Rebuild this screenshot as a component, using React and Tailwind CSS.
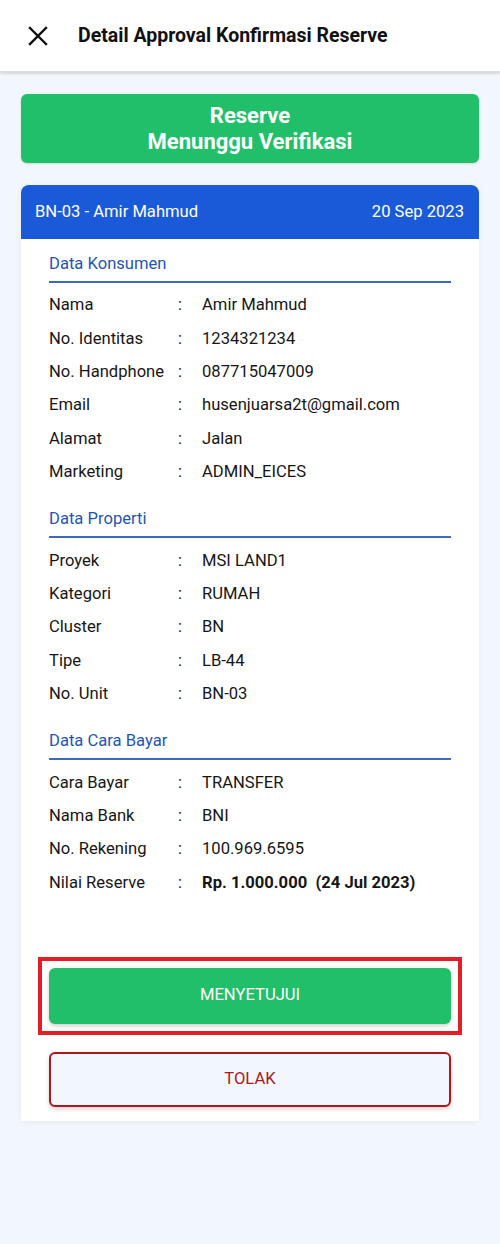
import React from "react";

const konsumen = [
  ["Nama", "Amir Mahmud"],
  ["No. Identitas", "1234321234"],
  ["No. Handphone", "087715047009"],
  ["Email", "husenjuarsa2t@gmail.com"],
  ["Alamat", "Jalan"],
  ["Marketing", "ADMIN_EICES"],
];

const properti = [
  ["Proyek", "MSI LAND1"],
  ["Kategori", "RUMAH"],
  ["Cluster", "BN"],
  ["Tipe", "LB-44"],
  ["No. Unit", "BN-03"],
];

const caraBayar = [
  ["Cara Bayar", "TRANSFER"],
  ["Nama Bank", "BNI"],
  ["No. Rekening", "100.969.6595"],
  ["Nilai Reserve", "Rp. 1.000.000  (24 Jul 2023)", true],
];

const Section = ({ title, rows, first }) => (
  <div className={first ? "pt-[13px]" : "pt-[18px]"}>
    <div className="text-[16.6px] leading-6 text-[#1f56b3]">{title}</div>
    <div className="mt-[5px] h-[2px] bg-[#3d6bbf]" />
    <div className="mt-[6px]">
      {rows.map(([label, value, bold]) => (
        <div key={label} className="flex h-[33.4px] items-center text-[16.6px] text-[#161616]">
          <span className="w-[129px] shrink-0">{label}</span>
          <span className="w-[24px] shrink-0">:</span>
          <span className={bold ? "whitespace-pre font-bold" : ""}>{value}</span>
        </div>
      ))}
    </div>
  </div>
);

export default function App() {
  return (
    <div className="min-h-[1244px] bg-[#f1f7fd] font-['Roboto',sans-serif]">
      {/* top bar */}
      <div className="flex h-[73px] items-center border-b-2 border-[#dcdee2] bg-white shadow-sm">
        <svg className="ml-[27px] h-[22px] w-[22px]" viewBox="0 0 22 22" fill="none" stroke="#111" strokeWidth="2.4" strokeLinecap="square">
          <path d="M3 3L19 19M19 3L3 19" />
        </svg>
        <h1 className="ml-[29px] text-[19.5px] font-bold text-[#111]">Detail Approval Konfirmasi Reserve</h1>
      </div>

      <div className="px-[21px] pt-[21px]">
        {/* status banner */}
        <div className="flex h-[69px] flex-col items-center justify-center rounded-md bg-[#22bf6a] text-[22px] font-bold leading-[26px] text-white shadow-sm">
          <span>Reserve</span>
          <span>Menunggu Verifikasi</span>
        </div>

        {/* detail card */}
        <div className="mt-[22px] rounded-t-lg bg-white shadow-[0_1px_6px_rgba(0,0,0,0.06)]">
          <div className="flex h-[54px] items-center justify-between rounded-t-lg bg-[#1a5ad8] pl-[14px] pr-[15px] text-[16.6px] text-white">
            <span>BN-03 - Amir Mahmud</span>
            <span>20 Sep 2023</span>
          </div>

          <div className="px-[28px] pb-[14px]">
            <Section title="Data Konsumen" rows={konsumen} first />
            <Section title="Data Properti" rows={properti} />
            <Section title="Data Cara Bayar" rows={caraBayar} />

            <div className="relative mt-[68px]">
              <button className="flex h-[56px] w-full items-center justify-center rounded-md bg-[#22bf6a] text-[16.6px] text-white shadow-[0_2px_4px_rgba(0,0,0,0.2)]">
                MENYETUJUI
              </button>
              <div className="pointer-events-none absolute -inset-[11px] border-4 border-[#e21f26]" />
            </div>

            <button className="mt-[28px] flex h-[55px] w-full items-center justify-center rounded-md border-2 border-[#b3151c] bg-[#f1f7fd] text-[16.6px] text-[#b3151c] shadow-[0_2px_4px_rgba(0,0,0,0.18)]">
              TOLAK
            </button>
          </div>
        </div>
      </div>
    </div>
  );
}
